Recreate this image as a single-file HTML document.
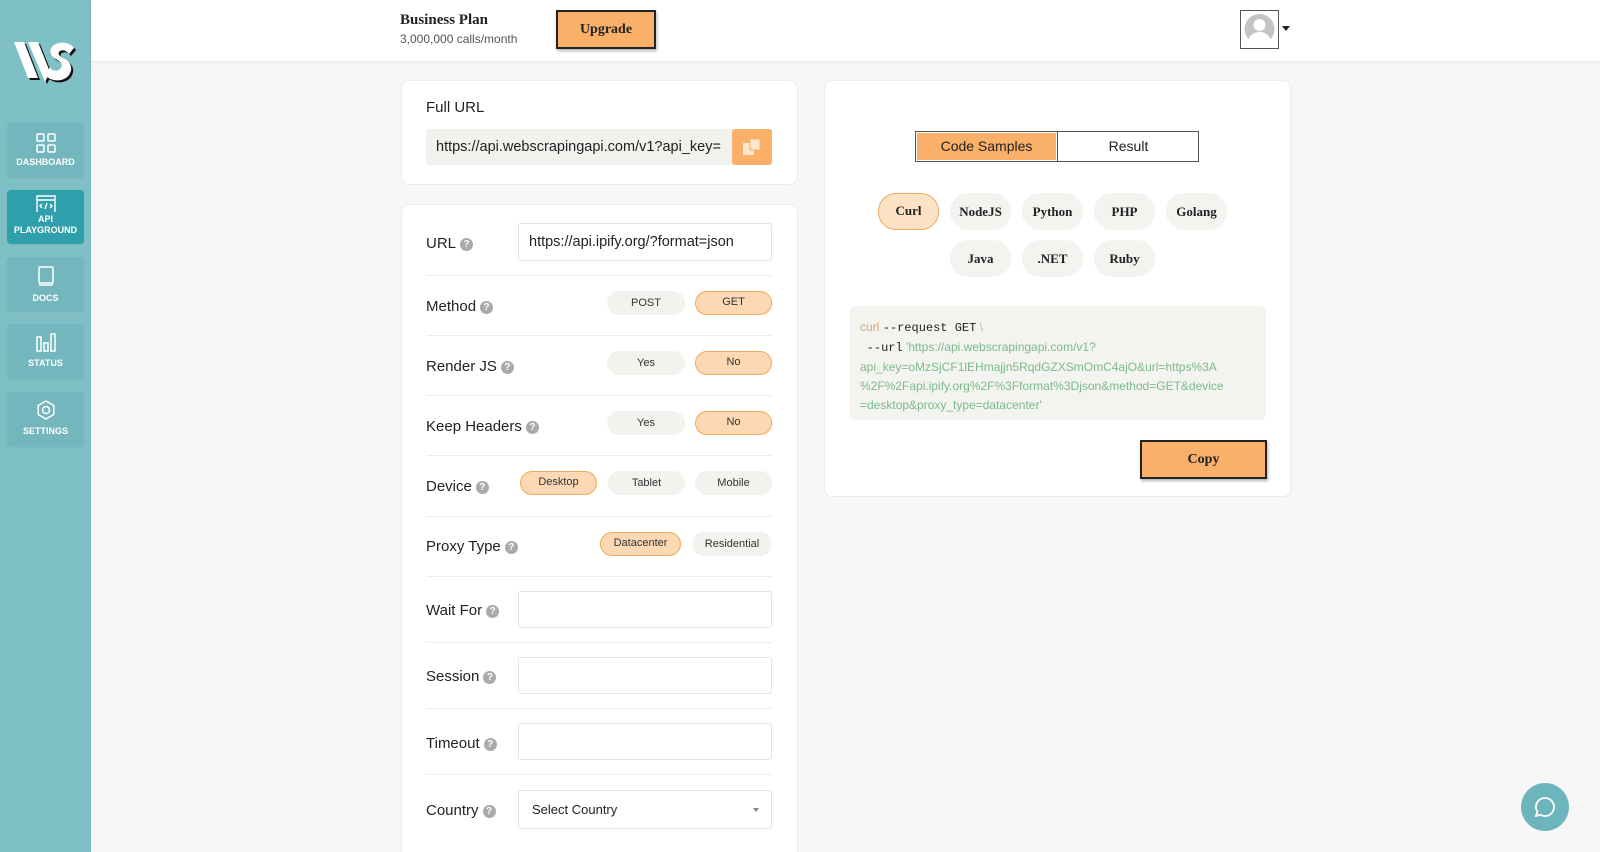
<!DOCTYPE html>
<html style="background:#f7f7f5"><head><meta charset="utf-8"><style>
*{box-sizing:border-box;margin:0;padding:0}
html,body{width:1600px;height:852px;overflow:hidden}
body{background:#f7f7f5;font-family:"Liberation Sans",sans-serif;color:#222;position:relative}
.abs{position:absolute}
.side{left:0;top:0;width:91px;height:852px;background:#7fc0c6}
.nav{position:absolute;left:7px;width:77px;background:#73b6bd;border-radius:4px;color:#fff;font-size:9px;font-weight:bold;text-align:center;box-shadow:0 1px 2px rgba(0,0,0,.08)}
.nav.act{background:#2fa0ab}
.nav svg{display:block;margin:0 auto}
.header{left:91px;top:0;width:1509px;height:61px;background:#fff;box-shadow:0 1px 3px rgba(0,0,0,.08)}
.card{background:#fff;border:1px solid #ececea;border-radius:8px}
.lbl{position:absolute;left:426px;font-size:15px;color:#222}
.q{display:inline-block;width:13px;height:13px;border-radius:50%;background:#aaa;color:#fff;font-size:10px;line-height:13px;text-align:center;font-weight:bold;vertical-align:1px;margin-left:4px}
.hr{position:absolute;left:426px;width:346px;height:1px;background:#ececea}
.pill{position:absolute;height:24px;border-radius:12px;background:#f2f2ef;font-size:11px;text-align:center;line-height:24px;color:#333}
.pill.on{background:#fcd9b4;border:1.5px solid #f0a959;line-height:21px}
.inp{position:absolute;left:518px;width:254px;background:#fff;border:1px solid #e3e3e0;border-radius:3px}
.lang{position:absolute;width:61px;height:37px;border-radius:18px;background:#f3f3f0;font-family:"Liberation Serif",serif;font-weight:bold;font-size:13px;text-align:center;line-height:37px;color:#222}
.lang.on{background:#fde2c6;border:1.5px solid #eeaa60;line-height:34px}
</style></head><body>
<div class="abs side">
  <svg class="abs" style="left:12px;top:40px" width="66" height="44" viewBox="0 0 66 44">
    <g fill="#111" transform="translate(2,2)"><path d="M2 2h10l14 36h-10z"/><path d="M16 2h10l12 30-5 10z"/><path d="M62 8c-4-6-14-7-20-3-6 4-4 11 2 14 5 3 8 6 4 10-3 3-8 2-10-2l-4 9c6 6 18 6 23-1 5-7 1-14-6-17-4-2-6-5-3-7 3-2 7 0 9 3z"/></g>
    <g fill="#fff"><path d="M2 2h10l14 36h-10z"/><path d="M16 2h10l12 30-5 10z"/><path d="M62 8c-4-6-14-7-20-3-6 4-4 11 2 14 5 3 8 6 4 10-3 3-8 2-10-2l-4 9c6 6 18 6 23-1 5-7 1-14-6-17-4-2-6-5-3-7 3-2 7 0 9 3z"/></g>
  </svg>
  <div class="nav" style="top:123px;height:54px"><svg style="margin-top:10px" width="20" height="20" viewBox="0 0 20 20" fill="none" stroke="#fff" stroke-width="1.5"><rect x="1" y="1" width="7" height="7" rx="1"/><rect x="12" y="1" width="7" height="7" rx="1"/><rect x="1" y="12" width="7" height="7" rx="1"/><rect x="12" y="12" width="7" height="7" rx="1"/></svg><div style="margin-top:4px">DASHBOARD</div></div>
  <div class="nav act" style="top:190px;height:54px"><svg style="margin-top:4px" width="22" height="20" viewBox="0 0 22 20" fill="none" stroke="#fff" stroke-width="1.4"><path d="M2 18V2h18v16M2 6h18"/><path d="M7 10l-2 2 2 2M15 10l2 2-2 2M12 9l-2 6"/></svg><div style="line-height:11px">API<br>PLAYGROUND</div></div>
  <div class="nav" style="top:257px;height:54px"><svg style="margin-top:8px" width="18" height="22" viewBox="0 0 18 22" fill="none" stroke="#fff" stroke-width="1.5"><rect x="2" y="2" width="14" height="16" rx="1"/><path d="M2 20h14"/></svg><div style="margin-top:6px">DOCS</div></div>
  <div class="nav" style="top:324px;height:55px"><svg style="margin-top:8px" width="22" height="20" viewBox="0 0 22 20" fill="none" stroke="#fff" stroke-width="1.5"><rect x="2" y="5" width="4" height="14"/><rect x="9" y="11" width="4" height="8"/><rect x="16" y="2" width="4" height="17"/></svg><div style="margin-top:6px">STATUS</div></div>
  <div class="nav" style="top:392px;height:54px"><svg style="margin-top:8px" width="20" height="20" viewBox="0 0 20 20" fill="none" stroke="#fff" stroke-width="1.5"><path d="M10 1l7.8 4.5v9L10 19l-7.8-4.5v-9z"/><circle cx="10" cy="10" r="3.5"/></svg><div style="margin-top:6px">SETTINGS</div></div>
</div>
<div class="abs header"></div>
<div class="abs" style="left:400px;top:12px;font-family:'Liberation Serif',serif;font-weight:bold;font-size:15px;color:#222">Business Plan</div>
<div class="abs" style="left:400px;top:32px;font-size:12px;color:#555">3,000,000 calls/month</div>
<div class="abs" style="left:556px;top:10px;width:100px;height:39px;background:#fbb06a;border:2px solid #222;box-shadow:1px 2px 3px rgba(0,0,0,.3);font-family:'Liberation Serif',serif;font-weight:bold;font-size:14px;text-align:center;line-height:35px">Upgrade</div>
<div class="abs" style="left:1240px;top:10px;width:39px;height:39px;border:1px solid #555;background:#fff;overflow:hidden"><svg width="37" height="37" viewBox="0 0 37 37"><circle cx="18.5" cy="18" r="15" fill="#c4c4c4"/><circle cx="18.5" cy="14" r="6" fill="#fff"/><path d="M7 30c2-7 7-9 11.5-9s9.5 2 11.5 9c-3 3-7 4-11.5 4S10 33 7 30z" fill="#fff"/></svg></div>
<div class="abs" style="left:1282px;top:26px;width:0;height:0;border-left:4px solid transparent;border-right:4px solid transparent;border-top:5px solid #222"></div>

<div class="abs card" style="left:401px;top:80px;width:397px;height:105px"></div>
<div class="abs" style="left:426px;top:99px;font-size:15px">Full URL</div>
<div class="abs" style="left:426px;top:129px;width:346px;height:36px;background:#f1f1ee;border-radius:3px;overflow:hidden;font-size:14.5px;line-height:36px;padding-left:10px;white-space:nowrap">https://api.webscrapingapi.com/v1?api_key=</div>
<div class="abs" style="left:732px;top:129px;width:40px;height:36px;background:#fbb06a;border-radius:3px"><svg style="margin:9px 0 0 10px" width="20" height="18" viewBox="0 0 20 18"><rect x="1" y="5" width="11" height="12" fill="#fde6d0"/><rect x="8" y="1" width="10" height="11" fill="#fde6d0" stroke="#fbb06a" stroke-width="1"/></svg></div>

<div class="abs card" style="left:401px;top:204px;width:397px;height:648px;border-bottom:none;border-bottom-left-radius:0;border-bottom-right-radius:0"></div>
<div class="lbl" style="top:235px">URL<span class="q">?</span></div>
<div class="inp" style="top:223px;height:38px;font-size:14.5px;line-height:36px;padding-left:10px">https://api.ipify.org/?format=json</div>
<div class="hr" style="top:275px"></div>
<div class="lbl" style="top:298px">Method<span class="q">?</span></div>
<div class="pill" style="left:607px;top:291px;width:78px">POST</div><div class="pill on" style="left:695px;top:291px;width:77px">GET</div>
<div class="hr" style="top:335px"></div>
<div class="lbl" style="top:358px">Render JS<span class="q">?</span></div>
<div class="pill" style="left:607px;top:351px;width:78px">Yes</div><div class="pill on" style="left:695px;top:351px;width:77px">No</div>
<div class="hr" style="top:395px"></div>
<div class="lbl" style="top:418px">Keep Headers<span class="q">?</span></div>
<div class="pill" style="left:607px;top:411px;width:78px">Yes</div><div class="pill on" style="left:695px;top:411px;width:77px">No</div>
<div class="hr" style="top:455px"></div>
<div class="lbl" style="top:478px">Device<span class="q">?</span></div>
<div class="pill on" style="left:520px;top:471px;width:77px">Desktop</div><div class="pill" style="left:608px;top:471px;width:77px">Tablet</div><div class="pill" style="left:695px;top:471px;width:77px">Mobile</div>
<div class="hr" style="top:516px"></div>
<div class="lbl" style="top:538px">Proxy Type<span class="q">?</span></div>
<div class="pill on" style="left:600px;top:532px;width:81px">Datacenter</div><div class="pill" style="left:692px;top:532px;width:80px">Residential</div>
<div class="hr" style="top:576px"></div>
<div class="lbl" style="top:602px">Wait For<span class="q">?</span></div>
<div class="inp" style="top:591px;height:37px"></div>
<div class="hr" style="top:642px"></div>
<div class="lbl" style="top:668px">Session<span class="q">?</span></div>
<div class="inp" style="top:657px;height:37px"></div>
<div class="hr" style="top:708px"></div>
<div class="lbl" style="top:735px">Timeout<span class="q">?</span></div>
<div class="inp" style="top:723px;height:37px"></div>
<div class="hr" style="top:774px"></div>
<div class="lbl" style="top:802px">Country<span class="q">?</span></div>
<div class="inp" style="top:790px;height:39px;font-size:13px;line-height:37px;padding-left:13px">Select Country<span style="position:absolute;right:12px;top:17px;border-left:3px solid transparent;border-right:3px solid transparent;border-top:4px solid #888"></span></div>

<div class="abs card" style="left:824px;top:80px;width:467px;height:417px"></div>
<div class="abs" style="left:915px;top:131px;width:284px;height:31px;border:1px solid #555;background:#fff"></div>
<div class="abs" style="left:917px;top:133px;width:139px;height:27px;background:#fbb06a;font-size:14px;text-align:center;line-height:27px">Code Samples</div>
<div class="abs" style="left:1057px;top:131px;width:1px;height:31px;background:#555"></div>
<div class="abs" style="left:1058px;top:131px;width:141px;height:31px;font-size:14px;text-align:center;line-height:31px">Result</div>
<div class="lang on" style="left:878px;top:193px">Curl</div>
<div class="lang" style="left:950px;top:193px">NodeJS</div>
<div class="lang" style="left:1022px;top:193px">Python</div>
<div class="lang" style="left:1094px;top:193px">PHP</div>
<div class="lang" style="left:1166px;top:193px">Golang</div>
<div class="lang" style="left:950px;top:240px">Java</div>
<div class="lang" style="left:1022px;top:240px">.NET</div>
<div class="lang" style="left:1094px;top:240px">Ruby</div>
<div class="abs" style="left:850px;top:306px;width:416px;height:114px;background:#f3f3ef;border-radius:6px;padding:12px 0 0 10px;font-size:12px;line-height:19px;color:#7bbb8a;word-break:break-all">
<span style="color:#d9a46a">curl</span> <span style="font-family:'Liberation Mono',monospace;color:#222">--request GET</span> <span style="color:#bbb">\</span><br>
&nbsp;&nbsp;<span style="font-family:'Liberation Mono',monospace;color:#222">--url</span> 'https://api.webscrapingapi.com/v1?<br>api_key=oMzSjCF1lEHmajjn5RqdGZXSmOmC4ajO&amp;url=https%3A<br>%2F%2Fapi.ipify.org%2F%3Fformat%3Djson&amp;method=GET&amp;device<br>=desktop&amp;proxy_type=datacenter'</div>
<div class="abs" style="left:1140px;top:440px;width:127px;height:39px;background:#fbb06a;border:2px solid #222;box-shadow:1px 2px 3px rgba(0,0,0,.3);font-family:'Liberation Serif',serif;font-weight:bold;font-size:14px;text-align:center;line-height:35px">Copy</div>
<div class="abs" style="left:1521px;top:783px;width:48px;height:48px;border-radius:50%;background:#6cb5bc"><svg style="margin:13px 0 0 13px" width="22" height="22" viewBox="0 0 22 22" fill="none" stroke="#fff" stroke-width="1.8"><path d="M11 2a9 9 0 1 1-4.5 16.8L2 20l1.3-4.3A9 9 0 0 1 11 2z"/></svg></div>
</body></html>
